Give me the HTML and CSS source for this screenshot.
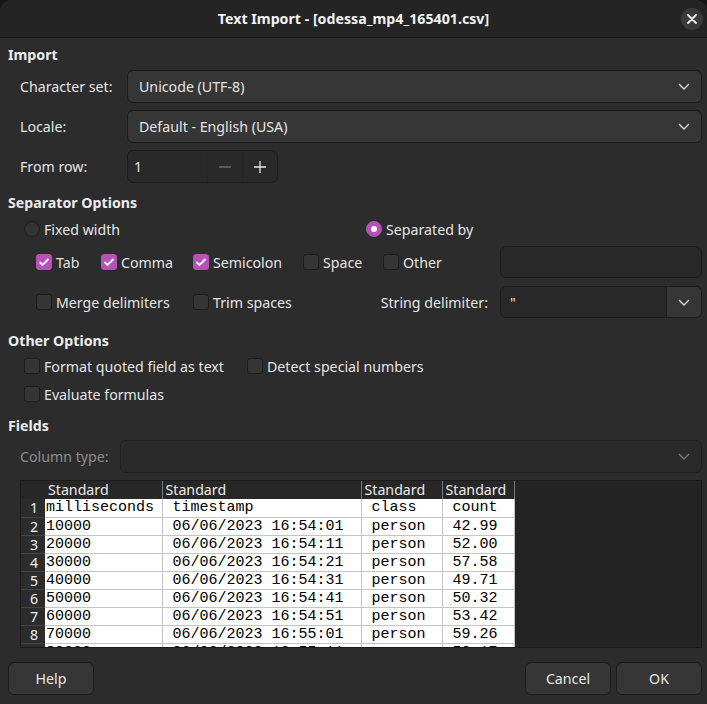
FILE: index.html
```html
<!DOCTYPE html>
<html lang="en">
<head>
<meta charset="utf-8">
<title>Text Import</title>
<link rel="stylesheet" href="styles.css">
</head>
<body>
<div class="dialog">
  <header class="titlebar">
    <div class="spacer"></div>
    <div class="title">Text Import - [odessa_mp4_165401.csv]</div>
    <button class="close" aria-label="Close">
      <svg width="10" height="10" viewBox="0 0 10 10"><path d="M1 1L9 9M9 1L1 9" stroke="#f0f0f0" stroke-width="1.8" stroke-linecap="round"/></svg>
    </button>
  </header>

  <main class="content">
    <h2 class="sec sec-import">Import</h2>

    <div class="form-row fr-first">
      <span class="flabel">Character set:</span>
      <div class="combo"><span class="combo-text">Unicode (UTF-8)</span>
        <svg class="chev" width="12" height="7" viewBox="0 0 12 7"><path d="M1 1L6 6L11 1" fill="none" stroke="#dcdcdc" stroke-width="1.4"/></svg>
      </div>
    </div>
    <div class="form-row">
      <span class="flabel">Locale:</span>
      <div class="combo"><span class="combo-text">Default - English (USA)</span>
        <svg class="chev" width="12" height="7" viewBox="0 0 12 7"><path d="M1 1L6 6L11 1" fill="none" stroke="#dcdcdc" stroke-width="1.4"/></svg>
      </div>
    </div>
    <div class="form-row">
      <span class="flabel">From row:</span>
      <div class="spin">
        <span class="spin-val">1</span>
        <span class="spin-btn minus"><svg width="12" height="12" viewBox="0 0 12 12"><path d="M0 6H12" stroke="#6a6a6a" stroke-width="1.3"/></svg></span>
        <span class="spin-btn plus"><svg width="12" height="12" viewBox="0 0 12 12"><path d="M0 6H12M6 0V12" stroke="#e8e8e8" stroke-width="1.3"/></svg></span>
      </div>
    </div>

    <h2 class="sec sec-sep">Separator Options</h2>
    <div class="radio-row">
      <label class="opt opt-fixed"><span class="radio"></span>Fixed width</label>
      <label class="opt"><span class="radio on"></span>Separated by</label>
    </div>

    <div class="sep-grid">
      <label class="opt"><span class="cb on"><svg width="12" height="10" viewBox="0 0 12 10"><path d="M1.5 5L4.5 8L10.5 2" fill="none" stroke="#fff" stroke-width="1.8"/></svg></span>Tab</label>
      <label class="opt"><span class="cb on"><svg width="12" height="10" viewBox="0 0 12 10"><path d="M1.5 5L4.5 8L10.5 2" fill="none" stroke="#fff" stroke-width="1.8"/></svg></span>Comma</label>
      <label class="opt"><span class="cb on"><svg width="12" height="10" viewBox="0 0 12 10"><path d="M1.5 5L4.5 8L10.5 2" fill="none" stroke="#fff" stroke-width="1.8"/></svg></span>Semicolon</label>
      <label class="opt"><span class="cb"></span>Space</label>
      <label class="opt"><span class="cb"></span>Other</label>
      <div class="entry"></div>

      <label class="opt span2"><span class="cb"></span>Merge delimiters</label>
      <label class="opt"><span class="cb"></span>Trim spaces</label>
      <span class="strdel">String delimiter:</span>
      <div class="entry-combo"><span class="ec-text">"</span>
        <span class="ec-btn"><svg width="12" height="7" viewBox="0 0 12 7"><path d="M1 1L6 6L11 1" fill="none" stroke="#dcdcdc" stroke-width="1.4"/></svg></span>
      </div>
    </div>

    <h2 class="sec sec-other">Other Options</h2>
    <div class="opt-row first">
      <label class="opt opt-format"><span class="cb"></span>Format quoted field as text</label>
      <label class="opt"><span class="cb"></span>Detect special numbers</label>
    </div>
    <div class="opt-row second">
      <label class="opt"><span class="cb"></span>Evaluate formulas</label>
    </div>

    <h2 class="sec sec-fields">Fields</h2>
    <div class="coltype-row">
      <span class="clabel">Column type:</span>
      <div class="combo disabled">
        <svg class="chev" width="12" height="7" viewBox="0 0 12 7"><path d="M1 1L6 6L11 1" fill="none" stroke="#7a7a7a" stroke-width="1.4"/></svg>
      </div>
    </div>

    <div class="preview">
      <table class="grid">
        <colgroup>
          <col class="c-num"><col class="c-1"><col class="c-2"><col class="c-3"><col class="c-4">
        </colgroup>
        <thead>
          <tr><th class="corner"></th><th>Standard</th><th>Standard</th><th>Standard</th><th>Standard</th></tr>
        </thead>
        <tbody>
          <tr><th class="rn">1</th><td>milliseconds</td><td> timestamp</td><td> class</td><td> count</td></tr>
          <tr><th class="rn">2</th><td>10000</td><td> 06/06/2023 16:54:01</td><td> person</td><td> 42.99</td></tr>
          <tr><th class="rn">3</th><td>20000</td><td> 06/06/2023 16:54:11</td><td> person</td><td> 52.00</td></tr>
          <tr><th class="rn">4</th><td>30000</td><td> 06/06/2023 16:54:21</td><td> person</td><td> 57.58</td></tr>
          <tr><th class="rn">5</th><td>40000</td><td> 06/06/2023 16:54:31</td><td> person</td><td> 49.71</td></tr>
          <tr><th class="rn">6</th><td>50000</td><td> 06/06/2023 16:54:41</td><td> person</td><td> 50.32</td></tr>
          <tr><th class="rn">7</th><td>60000</td><td> 06/06/2023 16:54:51</td><td> person</td><td> 53.42</td></tr>
          <tr><th class="rn">8</th><td>70000</td><td> 06/06/2023 16:55:01</td><td> person</td><td> 59.26</td></tr>
          <tr><th class="rn">9</th><td>80000</td><td> 06/06/2023 16:55:11</td><td> person</td><td> 50.17</td></tr>
        </tbody>
      </table>
    </div>

    <div class="buttons">
      <button class="btn">Help</button>
      <div class="btn-group">
        <button class="btn">Cancel</button>
        <button class="btn">OK</button>
      </div>
    </div>
  </main>
</div>
</body>
</html>
```

FILE: styles.css
```css
* { box-sizing: border-box; margin: 0; padding: 0; }
html, body { background: #161616; }
body {
  margin: 0;
  font-family: "Noto Sans", "Open Sans", sans-serif;
  font-size: 14.2px;
  color: #e4e4e4;
}
.dialog {
  width: 707px;
  height: 704px;
  background: #2c2c2c;
  border-radius: 12px 12px 0 0;
  overflow: hidden;
}
.titlebar {
  height: 38px;
  background: #242424;
  border-bottom: 1px solid #191919;
  display: grid;
  grid-template-columns: 1fr auto 1fr;
  align-items: center;
}
.title { font-weight: bold; color: #f2f2f2; }
.close {
  justify-self: end;
  margin-right: 4px;
  width: 22px; height: 22px;
  border-radius: 50%;
  background: #3a3a3a;
  border: none;
  display: flex; align-items: center; justify-content: center;
}
.content { padding: 0 5px 0 8px; }

.sec { font-size: 14.2px; font-weight: bold; height: 18px; line-height: 18px; color: #ececec; }
.sec-import { margin-top: 8px; }
.sec-sep { margin-top: 11px; }
.sec-other { margin-top: 14px; }
.sec-fields { margin-top: 14px; }

.form-row { display: flex; align-items: center; height: 33px; margin-top: 7px; padding-left: 12px; }
.form-row.fr-first { margin-top: 6px; }
.flabel { width: 107px; }

.combo {
  flex: 1;
  height: 33px;
  background: #363636;
  border: 1px solid #1c1c1c;
  border-radius: 6px;
  display: flex; align-items: center;
  padding: 0 11px 0 11px;
}
.combo-text { flex: 1; }
.combo .chev { margin-left: auto; }
.combo.disabled { background: #2a2a2a; border-color: #202020; }

.spin {
  width: 151px; height: 33px;
  border: 1px solid #1c1c1c;
  border-radius: 6px;
  background: #292929;
  display: flex;
  overflow: hidden;
}
.spin-val { width: 79px; display: flex; align-items: center; padding-left: 6px; }
.spin-btn { width: 35px; display: flex; align-items: center; justify-content: center; border-left: 1px solid #262626; }

.radio-row { display: flex; align-items: center; height: 18px; margin-top: 8px; padding-left: 16px; }
.opt { display: flex; align-items: center; white-space: nowrap; }
.opt-fixed { width: 342px; }
.radio {
  width: 16px; height: 16px; border-radius: 50%;
  background: #323232; border: 1px solid #1c1c1c;
  margin-right: 4px;
  display: flex; align-items: center; justify-content: center;
}
.radio.on { background: #b452b8; border-color: #b452b8; }
.radio.on::after { content: ""; width: 6px; height: 6px; border-radius: 50%; background: #fff; }

.cb {
  width: 16px; height: 16px; border-radius: 3px;
  background: #353535; border: 1px solid #1c1c1c;
  margin-right: 4px;
  display: flex; align-items: center; justify-content: center;
}
.cb.on { background: #b452b8; border-color: #b452b8; }

.sep-grid {
  margin-top: 8px;
  margin-left: 28px;
  display: grid;
  grid-template-columns: 65px 92px 110px 80px 117px 1fr;
  grid-template-rows: 32px 32px;
  row-gap: 8px;
  align-items: center;
}
.span2 { grid-column: span 2; }
.strdel { grid-column: span 2; justify-self: end; padding-right: 12px; }
.entry {
  height: 32px;
  background: #282828;
  border: 1px solid #1c1c1c;
  border-radius: 6px;
}
.entry-combo {
  height: 32px;
  border: 1px solid #1c1c1c;
  border-radius: 6px;
  background: #282828;
  display: flex;
  overflow: hidden;
}
.ec-text { flex: 1; display: flex; align-items: center; padding-left: 9px; }
.ec-btn { width: 35px; background: #363636; border-left: 1px solid #1f1f1f; display: flex; align-items: center; justify-content: center; }

.opt-row { display: flex; align-items: center; height: 18px; padding-left: 16px; }
.opt-row.first { margin-top: 7px; }
.opt-row.second { margin-top: 10px; }
.opt-format { width: 223px; }

.coltype-row { display: flex; align-items: center; height: 33px; margin-top: 5px; padding-left: 12px; }
.clabel { width: 100px; color: #8c8c8c; }

.preview {
  margin-top: 7px;
  margin-left: 12px;
  height: 168px;
  background: #242424;
  border: 1px solid #1a1a1a;
  overflow: hidden;
}
.grid {
  border-collapse: collapse;
  table-layout: fixed;
  width: 493px;
}
.c-num { width: 24px; }
.c-1 { width: 117px; }
.c-2 { width: 199px; }
.c-3 { width: 81px; }
.c-4 { width: 72px; }
.grid thead th {
  height: 18px;
  background: #272727;
  color: #ececec;
  font-weight: normal;
  text-align: left;
  padding: 0 0 0 3px;
  line-height: 18px;
  border-right: 1px solid #7a7a7a;
  font-size: 14.2px;
}
.grid thead th.corner { border-right: none; }
.grid th.rn {
  background: #2c2c2c;
  color: #eeeeee;
  font-weight: normal;
  text-align: center;
  height: 18px;
  line-height: 17px;
  border-bottom: 1px solid #444;
  font-size: 14.2px;
  padding-left: 2px;
}
.grid td {
  height: 18px;
  background: #ffffff;
  color: #000;
  font-family: "Liberation Mono", monospace;
  font-size: 15px;
  line-height: 17px;
  white-space: pre;
  overflow: hidden;
  padding: 0 0 0 1px;
  border-right: 1px solid #c4c4c4;
  border-bottom: 1px solid #c4c4c4;
}

.buttons { display: flex; justify-content: space-between; margin-top: 14px; }
.btn-group { display: flex; gap: 5px; }
.btn {
  width: 86px; height: 33px;
  background: #363636;
  border: 1px solid #1c1c1c;
  border-radius: 6px;
  color: #e6e6e6;
  font-family: inherit;
  font-size: 14.2px;
}
```
